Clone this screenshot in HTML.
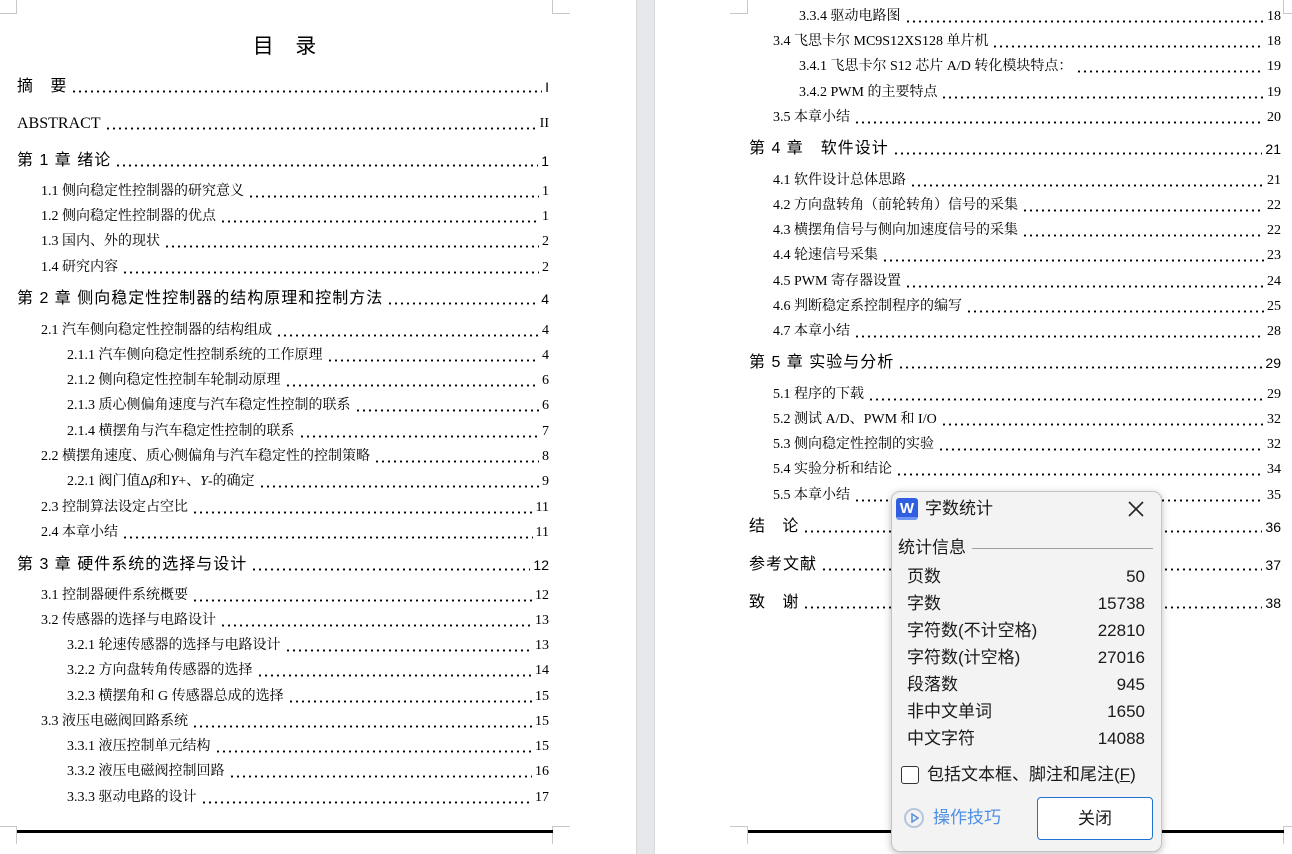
<!DOCTYPE html>
<html><head><meta charset="utf-8">
<style>
*{margin:0;padding:0;box-sizing:border-box}
body{width:1292px;height:854px;overflow:hidden;background:#fff;position:relative;font-family:"Liberation Serif","Noto Serif CJK SC","Noto Sans CJK SC",serif;color:#000}
.gap{position:absolute;left:636px;top:0;width:19px;height:854px;background:#e6e7ea;border-left:1px solid #d8d8d8;border-right:1px solid #d8d8d8}
.e{position:absolute;display:flex;align-items:flex-end;height:20px;line-height:20px;font-size:14px;white-space:nowrap}
.e.c{font-size:16px;letter-spacing:1px;font-family:"Liberation Sans","Noto Sans CJK SC",sans-serif}
.e b{font-weight:normal;font-size:14px;letter-spacing:0}
.e i{flex:1;height:3px;margin:0 3px 4px 4px;background-image:radial-gradient(circle,#000 1px,transparent 1.2px);background-size:6px 3px;background-repeat:repeat-x}
.L{right:743px}.R{right:11px}
.rule{position:absolute;top:830px;height:3px;background:#000}
.mk{position:absolute;border-color:#c8c8c8;border-style:solid;width:18px;height:18px}
.dlg{position:absolute;left:891px;top:491px;width:271px;height:361px;background:#f3f3f3;border:1px solid #c4c4c4;border-radius:9px;box-shadow:0 2px 8px rgba(0,0,0,.25);font-family:"Liberation Sans","Noto Sans CJK SC",sans-serif;font-size:17px;color:#1a1a1a}
.dlg .r{position:absolute;left:15px;right:16px;display:flex;justify-content:space-between;height:24px;line-height:24px}
</style></head><body>
<div class="gap"></div>
<div class="mk" style="left:-1px;top:-4px;border-width:0 1px 1px 0"></div>
<div class="mk" style="left:552px;top:-4px;border-width:0 0 1px 1px"></div>
<div class="mk" style="left:730px;top:-4px;border-width:0 1px 1px 0"></div>
<div class="mk" style="left:1283px;top:-4px;border-width:0 0 1px 1px"></div>
<div class="mk" style="left:-1px;top:826px;border-width:1px 1px 0 0"></div>
<div class="mk" style="left:552px;top:826px;border-width:1px 0 0 1px"></div>
<div class="mk" style="left:730px;top:826px;border-width:1px 1px 0 0"></div>
<div class="mk" style="left:1283px;top:826px;border-width:1px 0 0 1px"></div>
<div class="rule" style="left:17px;width:536px"></div>
<div class="rule" style="left:748px;width:536px"></div>

<div style="position:absolute;left:0;width:570px;top:30px;text-align:center;font-size:21px;font-family:'Liberation Sans','Noto Sans CJK SC',sans-serif;letter-spacing:1px">目&nbsp;&nbsp;&nbsp;录</div>

<div class="e c L" style="left:17px;top:77px">摘&nbsp;&nbsp;&nbsp;要<i></i><b>I</b></div>
<div class="e c L" style="left:17px;top:114px;font-family:'Liberation Serif',serif;letter-spacing:0">ABSTRACT<i></i><b>II</b></div>
<div class="e c L" style="left:17px;top:151px">第 1 章 绪论<i></i><b>1</b></div>
<div class="e L" style="left:41px;top:182px">1.1 侧向稳定性控制器的研究意义<i></i>1</div>
<div class="e L" style="left:41px;top:207px">1.2 侧向稳定性控制器的优点<i></i>1</div>
<div class="e L" style="left:41px;top:232px">1.3 国内、外的现状<i></i>2</div>
<div class="e L" style="left:41px;top:258px">1.4 研究内容<i></i>2</div>
<div class="e c L" style="left:17px;top:289px">第 2 章 侧向稳定性控制器的结构原理和控制方法<i></i><b>4</b></div>
<div class="e L" style="left:41px;top:321px">2.1 汽车侧向稳定性控制器的结构组成<i></i>4</div>
<div class="e L" style="left:67px;top:346px">2.1.1 汽车侧向稳定性控制系统的工作原理<i></i>4</div>
<div class="e L" style="left:67px;top:371px">2.1.2 侧向稳定性控制车轮制动原理<i></i>6</div>
<div class="e L" style="left:67px;top:396px">2.1.3 质心侧偏角速度与汽车稳定性控制的联系<i></i>6</div>
<div class="e L" style="left:67px;top:422px">2.1.4 横摆角与汽车稳定性控制的联系<i></i>7</div>
<div class="e L" style="left:41px;top:447px">2.2 横摆角速度、质心侧偏角与汽车稳定性的控制策略<i></i>8</div>
<div class="e L" style="left:67px;top:472px">2.2.1 阀门值Δ<em>β</em> 和 <em>Y</em>+、<em>Y</em>-的确定<i></i>9</div>
<div class="e L" style="left:41px;top:498px">2.3 控制算法设定占空比<i></i>11</div>
<div class="e L" style="left:41px;top:523px">2.4 本章小结<i></i>11</div>
<div class="e c L" style="left:17px;top:555px">第 3 章 硬件系统的选择与设计<i></i><b>12</b></div>
<div class="e L" style="left:41px;top:586px">3.1 控制器硬件系统概要<i></i>12</div>
<div class="e L" style="left:41px;top:611px">3.2 传感器的选择与电路设计<i></i>13</div>
<div class="e L" style="left:67px;top:636px">3.2.1 轮速传感器的选择与电路设计<i></i>13</div>
<div class="e L" style="left:67px;top:661px">3.2.2 方向盘转角传感器的选择<i></i>14</div>
<div class="e L" style="left:67px;top:687px">3.2.3 横摆角和 G 传感器总成的选择<i></i>15</div>
<div class="e L" style="left:41px;top:712px">3.3 液压电磁阀回路系统<i></i>15</div>
<div class="e L" style="left:67px;top:737px">3.3.1 液压控制单元结构<i></i>15</div>
<div class="e L" style="left:67px;top:762px">3.3.2 液压电磁阀控制回路<i></i>16</div>
<div class="e L" style="left:67px;top:788px">3.3.3 驱动电路的设计<i></i>17</div>

<div class="e R" style="left:799px;top:7px">3.3.4 驱动电路图<i></i>18</div>
<div class="e R" style="left:773px;top:32px">3.4 飞思卡尔 MC9S12XS128 单片机<i></i>18</div>
<div class="e R" style="left:799px;top:57px">3.4.1 飞思卡尔 S12 芯片 A/D 转化模块特点：<i></i>19</div>
<div class="e R" style="left:799px;top:83px">3.4.2 PWM 的主要特点<i></i>19</div>
<div class="e R" style="left:773px;top:108px">3.5 本章小结<i></i>20</div>
<div class="e c R" style="left:749px;top:139px">第 4 章　软件设计<i></i><b>21</b></div>
<div class="e R" style="left:773px;top:171px">4.1 软件设计总体思路<i></i>21</div>
<div class="e R" style="left:773px;top:196px">4.2 方向盘转角（前轮转角）信号的采集<i></i>22</div>
<div class="e R" style="left:773px;top:221px">4.3 横摆角信号与侧向加速度信号的采集<i></i>22</div>
<div class="e R" style="left:773px;top:246px">4.4 轮速信号采集<i></i>23</div>
<div class="e R" style="left:773px;top:272px">4.5 PWM 寄存器设置<i></i>24</div>
<div class="e R" style="left:773px;top:297px">4.6 判断稳定系控制程序的编写<i></i>25</div>
<div class="e R" style="left:773px;top:322px">4.7 本章小结<i></i>28</div>
<div class="e c R" style="left:749px;top:353px">第 5 章 实验与分析<i></i><b>29</b></div>
<div class="e R" style="left:773px;top:385px">5.1 程序的下载<i></i>29</div>
<div class="e R" style="left:773px;top:410px">5.2 测试 A/D、PWM 和 I/O<i></i>32</div>
<div class="e R" style="left:773px;top:435px">5.3 侧向稳定性控制的实验<i></i>32</div>
<div class="e R" style="left:773px;top:460px">5.4 实验分析和结论<i></i>34</div>
<div class="e R" style="left:773px;top:486px">5.5 本章小结<i></i>35</div>
<div class="e c R" style="left:749px;top:517px">结&nbsp;&nbsp;&nbsp;论<i></i><b>36</b></div>
<div class="e c R" style="left:749px;top:555px">参考文献<i></i><b>37</b></div>
<div class="e c R" style="left:749px;top:593px">致&nbsp;&nbsp;&nbsp;谢<i></i><b>38</b></div>

<div class="dlg">
  <div style="position:absolute;left:4px;top:6px;width:22px;height:22px;background:#2f5fe0;border-radius:3px;color:#fff;font-weight:bold;font-size:15px;line-height:21px;text-align:center;border-bottom:3px solid #6f95f5">W</div>
  <div style="position:absolute;left:33px;top:5px;line-height:24px">字数统计</div>
  <svg style="position:absolute;left:236px;top:9px" width="16" height="16" viewBox="0 0 16 16"><path d="M1 1L15 15M15 1L1 15" stroke="#222" stroke-width="1.6"/></svg>
  <div style="position:absolute;left:6px;top:44px;line-height:24px;background:#f3f3f3;padding-right:3px;z-index:1">统计信息</div>
  <div style="position:absolute;left:80px;right:8px;top:56px;height:1px;background:#a0a0a0"></div>
  <div class="r" style="top:73px"><span>页数</span><span>50</span></div>
  <div class="r" style="top:100px"><span>字数</span><span>15738</span></div>
  <div class="r" style="top:127px"><span>字符数(不计空格)</span><span>22810</span></div>
  <div class="r" style="top:154px"><span>字符数(计空格)</span><span>27016</span></div>
  <div class="r" style="top:181px"><span>段落数</span><span>945</span></div>
  <div class="r" style="top:208px"><span>非中文单词</span><span>1650</span></div>
  <div class="r" style="top:235px"><span>中文字符</span><span>14088</span></div>
  <div style="position:absolute;left:9px;top:274px;width:18px;height:18px;border:1.5px solid #333;border-radius:3px;background:#fff"></div>
  <div style="position:absolute;left:35px;top:271px;line-height:24px">包括文本框、脚注和尾注(<u>F</u>)</div>
  <div style="position:absolute;left:12px;top:316px;width:20px;height:20px;border:2px solid #b6c6dc;border-radius:50%"></div>
  <svg style="position:absolute;left:19px;top:321px" width="8" height="10"><path d="M1 1L7 5L1 9Z" fill="none" stroke="#5b8fd8" stroke-width="1.5"/></svg>
  <div style="position:absolute;left:41px;top:314px;line-height:24px;color:#4d8fe6">操作技巧</div>
  <div style="position:absolute;left:145px;top:305px;width:116px;height:43px;background:#fff;border:1px solid #1f72d1;border-radius:4px;text-align:center;line-height:41px">关闭</div>
</div>
</body></html>
